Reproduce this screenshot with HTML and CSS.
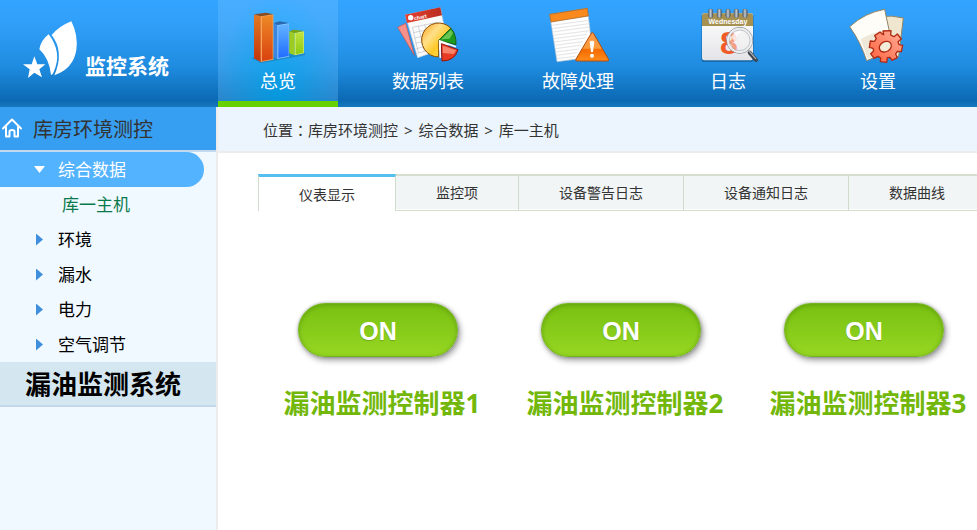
FILE: index.html
```
<!DOCTYPE html>
<html lang="zh-CN">
<head>
  <meta charset="UTF-8">
  <title>监控系统</title>
  <link rel="stylesheet" href="styles.css">
</head>
<body>

  <header class="header">
    <div class="logo">
      <svg class="logo-img" viewBox="66 60 171 180" aria-hidden="true">
        <path fill="#fff" d="M103 169l9 24 24 0-18 15 8 24-23-14-19 16 5-26-20-15 26 0z"/>
        <path fill="#fff" d="M146 103Q123 120 118 148Q148 175 153 225Q159 224 161 216Q188 158 146 103z"/>
        <path fill="#fff" d="M214 64Q178 78 155 105Q194 155 163 226Q220 206 229 150Q235 105 214 64z"/>
      </svg>
      <span class="logo-text">监控系统</span>
    </div>
    <nav class="menu">
      <a class="menu-item active" href="#">
        <svg class="menu-icon" viewBox="93 9 192 192" aria-hidden="true">
          <defs>
            <linearGradient id="barRed" x1="0" y1="0" x2="0" y2="1"><stop offset="0" stop-color="#ee8a26"/><stop offset="1" stop-color="#d9420f"/></linearGradient>
            <linearGradient id="barRedSide" x1="0" y1="0" x2="0" y2="1"><stop offset="0" stop-color="#e27a22"/><stop offset="1" stop-color="#c2330c"/></linearGradient>
            <linearGradient id="barBlue" x1="0" y1="0" x2="0" y2="1"><stop offset="0" stop-color="#62b4ff"/><stop offset="1" stop-color="#1f6cff"/></linearGradient>
            <linearGradient id="barGreen" x1="0" y1="0" x2="0" y2="1"><stop offset="0" stop-color="#c0e23c"/><stop offset="1" stop-color="#8ccb10"/></linearGradient>
          </defs>
          <path fill="#000" opacity=".15" d="M108 174l30 16 132-24v-8l-40-4z"/>
          <path fill="#9ccc22" d="M223 94l16 4v68l-16-6z"/>
          <path fill="#d3ee72" d="M239 98l28-4v66l-28 6z"/>
          <path fill="url(#barGreen)" d="M242 100l23-4v62l-23 5z"/>
          <path fill="#7ba512" d="M223 94l14-5 30 4-28 6z"/>
          <path fill="#3b86e0" d="M176 70l12 5v102l-12-7z"/>
          <path fill="#8cc5ff" d="M187 75l35-5v100l-35 7z"/>
          <path fill="url(#barBlue)" d="M190 77l31-5v96l-31 6z"/>
          <path fill="#2b68ad" d="M176 69l18-5 28 5-34 6z"/>
          <path fill="url(#barRedSide)" d="M117 44l21 4v138l-21-11z"/>
          <path fill="#f7a35c" d="M137 48l38-5v136l-38 7z"/>
          <path fill="url(#barRed)" d="M141 50l32-5v132l-32 6z"/>
          <path fill="#8d4b1c" d="M117 43l36-5 22 5-38 6z"/>
        </svg>
        <span>总览</span>
      </a>
      <a class="menu-item" href="#">
        <svg class="menu-icon" viewBox="543 9 192 192" aria-hidden="true">
          <defs>
            <linearGradient id="pieYellow" x1="0" y1="0" x2="1" y2="1"><stop offset="0" stop-color="#ff9d14"/><stop offset=".35" stop-color="#ffe08a"/><stop offset=".6" stop-color="#ffc928"/><stop offset="1" stop-color="#ffe95c"/></linearGradient>
            <linearGradient id="sheetHead" x1="0" y1="0" x2="1" y2="0"><stop offset="0" stop-color="#e8402e"/><stop offset="1" stop-color="#b82d22"/></linearGradient>
          </defs>
          <path fill="#f78f8a" stroke="#c94f49" stroke-width="2" d="M548 82l24-12 26 96z"/>
          <path fill="#fbfbfb" stroke="#c9ced6" stroke-width="2" d="M571 45l105-22 24 118-92 32z"/>
          <path fill="url(#sheetHead)" d="M570 44l106-22 5 24-105 23z"/>
          <circle cx="587" cy="53" r="8" fill="#fff"/>
          <text class="icon-chart" x="598" y="61" transform="rotate(-12 598 61)">chart</text>
          <path fill="none" stroke="#bcc1c9" stroke-width="2" d="M592 82l76-15M595 98l76-16M598 114l68-15M601 130l60-15M604 146l50-13M607 160l54-15M592 82l18 76M610 78l18 76M629 74l18 76M648 70l18 76"/>
          <path fill="url(#pieYellow)" stroke="#8a4c00" stroke-width="3" d="M671 121L671 171A51 51 0 1 1 708 85z"/>
          <path fill="#1f9a20" stroke="#176417" stroke-width="3" d="M671 121L708 85Q724 103 723 134z"/>
          <path fill="#8fdc6c" opacity=".65" d="M678 118l30-29 6 10-10 17z"/>
          <path fill="#e73c22" stroke="#8f1410" stroke-width="3" d="M679 131l50 18Q719 183 681 183z"/>
          <path fill="#ffa38c" opacity=".7" d="M683 137l41 14-8 11-33-3z"/>
          <path fill="none" stroke="#fff" stroke-width="5" d="M723 140l-49-17 2 51"/>
        </svg>
        <span>数据列表</span>
      </a>
      <a class="menu-item" href="#">
        <svg class="menu-icon" viewBox="108 9 192 192" aria-hidden="true">
          <defs>
            <linearGradient id="warn" x1="0" y1="0" x2="0" y2="1"><stop offset="0" stop-color="#ff9a4c"/><stop offset=".55" stop-color="#fb9a3a"/><stop offset=".6" stop-color="#f56a00"/><stop offset="1" stop-color="#ff8c1c"/></linearGradient>
          </defs>
          <path fill="#fff" stroke="#a9bccc" stroke-width="2" d="M119 43l113-18 18 146-109 14z"/>
          <path fill="none" stroke="#e4e4e4" stroke-width="3" d="M125 76l112-15M126 86l112-15M128 96l111-15M129 106l111-14M131 116l100-13M132 126l94-12M134 136l84-11M135 146l78-10M137 156l70-9M138 166l63-8M140 176l56-7"/>
          <path fill="#fb8a1e" stroke="#9a5712" stroke-width="2" d="M119 43l113-18 3 23-112 18z"/>
          <path fill="url(#warn)" stroke="#b34c08" stroke-width="3" stroke-linejoin="round" d="M245 98q3-2 6 3l44 76q3 6-4 6h-89q-7 0-4-6z"/>
          <path fill="#fff" d="M239 125q7-6 14 0l-4 31h-6z"/>
          <circle cx="246" cy="167" r="6" fill="#fff"/>
        </svg>
        <span>故障处理</span>
      </a>
      <a class="menu-item" href="#">
        <svg class="menu-icon" viewBox="558 9 192 192" aria-hidden="true">
          <defs>
            <linearGradient id="calBody" x1="0" y1="0" x2="0" y2="1"><stop offset="0" stop-color="#fff"/><stop offset="1" stop-color="#e4e4e8"/></linearGradient>
            <linearGradient id="ring" x1="0" y1="0" x2="1" y2="0"><stop offset="0" stop-color="#56616b"/><stop offset=".5" stop-color="#c3ccd4"/><stop offset="1" stop-color="#46525d"/></linearGradient>
          </defs>
          <rect x="574" y="42" width="157" height="144" rx="8" fill="#000" opacity=".25"/>
          <rect x="576" y="40" width="153" height="141" rx="7" fill="url(#calBody)"/>
          <path fill="#a69152" d="M576 78V47q0-7 7-7h139q7 0 7 7v31z"/>
          <g fill="url(#ring)" stroke="#4c5964" stroke-width="1">
            <rect x="595" y="27" width="14" height="26" rx="6"/>
            <rect x="621" y="27" width="14" height="26" rx="6"/>
            <rect x="647" y="27" width="14" height="26" rx="6"/>
            <rect x="672" y="27" width="14" height="26" rx="6"/>
            <rect x="698" y="27" width="14" height="26" rx="6"/>
          </g>
          <text class="icon-day" x="654" y="72">Wednesday</text>
          <text class="icon-date" x="657" y="162">8</text>
          <path stroke="#3f454c" stroke-width="12" stroke-linecap="round" d="M719 158l19 22"/>
          <path stroke="#a4abb3" stroke-width="4" stroke-linecap="round" d="M715 150l22 26"/>
          <circle cx="689" cy="121" r="39" fill="#f3f3f5" fill-opacity=".45" stroke="#8c9095" stroke-width="3"/>
          <circle cx="689" cy="121" r="35" fill="none" stroke="#eceef0" stroke-width="6"/>
          <circle cx="689" cy="121" r="31" fill="none" stroke="#a9adb2" stroke-width="2"/>
          <path fill="#fff" opacity=".7" d="M664 112q10-22 34-18-18 6-22 32z"/>
        </svg>
        <span>日志</span>
      </a>
      <a class="menu-item" href="#">
        <svg class="menu-icon" viewBox="138 9 192 192" aria-hidden="true">
          <defs>
            <linearGradient id="gear" x1="1" y1="0" x2="0" y2="1"><stop offset="0" stop-color="#ffb09a"/><stop offset="1" stop-color="#ff603c"/></linearGradient>
          </defs>
          <path fill="#efe6cf" stroke="#8f8566" stroke-width="3" d="M240 50q35-5 70 4l-14 116-66-6z"/>
          <path fill="#fffdf8" stroke="#8f8566" stroke-width="3" d="M149 80Q195 38 254 28L280 150 200 182Q182 126 149 80z"/>
          <path fill="#efe8d8" d="M182 118q36-22 82-27l10 56-71 30z"/>
          <path fill="url(#gear)" stroke="#b02a12" stroke-width="4" stroke-linejoin="round" d="M251 104l-2-11 24-1-1 13 10 5 10-8 12 15-10 8 3 9 11 2-4 19-12-1-5 8 5 11-16 8-6-9-8 1-2 14-19-2 1-11-8-5-12 6-10-14 9-8-2-8-11-3 3-19 12 1 6-8-5-9 16-11 8 7z"/>
          <ellipse cx="256" cy="140" rx="19" ry="15" transform="rotate(-30 256 140)" fill="#f3ecd8" stroke="#b02a12" stroke-width="4"/>
        </svg>
        <span>设置</span>
      </a>
    </nav>
  </header>

  <div class="container">
    <aside class="sidebar">
      <h2 class="sidebar-title">
        <svg class="home-icon" viewBox="0 0 20 20" aria-hidden="true">
          <path fill="none" stroke="#fff" stroke-width="2" stroke-linejoin="round" stroke-linecap="round" d="M1 10.500L10 1.500L19 10.500M4 9V18.500H7.500V13.500Q7.500 12 10 12T12.500 13.500V18.500H16V9"/>
        </svg>
        库房环境测控
      </h2>
      <ul class="tree">
        <li><a class="tree-item open" href="#">综合数据</a></li>
        <li><a class="tree-child" href="#">库一主机</a></li>
        <li><a class="tree-item" href="#">环境</a></li>
        <li><a class="tree-item" href="#">漏水</a></li>
        <li><a class="tree-item" href="#">电力</a></li>
        <li><a class="tree-item" href="#">空气调节</a></li>
      </ul>
      <h2 class="sidebar-section">漏油监测系统</h2>
    </aside>

    <main class="main">
      <div class="breadcrumb">位置<span class="colon" lang="zh-TW">：</span>库房环境测控 <span class="sep">&gt;</span> 综合数据 <span class="sep">&gt;</span> 库一主机</div>

      <div class="tabs">
        <button type="button" class="tab active">仪表显示</button>
        <button type="button" class="tab">监控项</button>
        <button type="button" class="tab">设备警告日志</button>
        <button type="button" class="tab">设备通知日志</button>
        <button type="button" class="tab">数据曲线</button>
      </div>

      <div class="controllers">
        <div class="controller">
          <button type="button" class="switch" aria-describedby="c1">ON</button>
          <p class="controller-name" id="c1">漏油监测控制器1</p>
        </div>
        <div class="controller">
          <button type="button" class="switch" aria-describedby="c2">ON</button>
          <p class="controller-name" id="c2">漏油监测控制器2</p>
        </div>
        <div class="controller">
          <button type="button" class="switch" aria-describedby="c3">ON</button>
          <p class="controller-name" id="c3">漏油监测控制器3</p>
        </div>
      </div>
    </main>
  </div>

</body>
</html>
```

FILE: styles.css
```
* {
  box-sizing: border-box;
}
body {
  margin: 0;
  min-height: 100vh;
  display: flex;
  flex-direction: column;
  overflow-x: hidden;
  font-family: "Noto Sans", "Noto Sans CJK SC", sans-serif;
  color: #333;
  background: #fff;
}
a {
  text-decoration: none;
}
button {
  font-family: inherit;
  cursor: pointer;
}

/* header */
.header {
  display: flex;
  background: linear-gradient(#33a4ff 0, #31a0fa 20%, #1f8ce0 62%, #0b69b3 94%, #1578bd 100%);
}
.logo {
  display: flex;
  flex: none;
  width: 218px;
  padding: 20px 0 0 22px;
}
.logo-img {
  width: 57px;
  height: 60px;
}
.logo-text {
  padding: 31px 0 0 6px;
  font-size: 21px;
  line-height: 30px;
  font-weight: bold;
  color: #fff;
}
.menu {
  display: flex;
  gap: 30px;
}
.menu-item {
  display: flex;
  flex-direction: column;
  align-items: center;
  width: 120px;
  padding-top: 3px;
  border-bottom: 6px solid transparent;
  font-size: 18px;
  line-height: 28px;
  color: #fff;
}
.menu-item.active {
  height: 107px;
  background: radial-gradient(ellipse at 50% 90%, rgba(0, 180, 245, 0.6), rgba(120, 195, 255, 0.3) 75%);
  border-bottom-color: #66d000;
}
.menu-icon {
  width: 64px;
  height: 64px;
}
.icon-chart,
.icon-day,
.icon-date {
  font-family: "Liberation Sans", Arial, sans-serif;
  font-weight: bold;
  fill: #fff;
}
.icon-chart {
  font-size: 16px;
}
.icon-day {
  font-size: 21px;
  text-anchor: middle;
}
.icon-date {
  font-size: 96px;
  text-anchor: middle;
  fill: #f15a29;
}

/* sidebar */
.container {
  display: flex;
  flex: 1;
}
.sidebar {
  flex: none;
  width: 218px;
  background: #f0f9ff;
  border-right: 2px solid #ececec;
}
.sidebar-title {
  display: flex;
  align-items: center;
  gap: 11px;
  margin: 0;
  padding: 2px 2px 0;
  border-bottom: 2px solid #c3d9f0;
  background: #379ff2;
  font-size: 20px;
  line-height: 41px;
  font-weight: normal;
}
.home-icon {
  width: 20px;
  height: 20px;
  margin-bottom: 4px;
}
.tree {
  margin: 0;
  padding: 0;
  list-style: none;
  font-size: 17px;
  line-height: 35px;
}
.tree-item {
  display: flex;
  align-items: center;
  gap: 15px;
  padding-left: 36px;
  color: #000;
}
.tree-item::before {
  content: "";
  width: 7px;
  height: 12px;
  background: #3f8fdc;
  clip-path: polygon(0 0, 100% 50%, 0 100%);
}
.tree-item.open {
  gap: 13px;
  margin-right: 12px;
  padding-left: 34px;
  border-radius: 0 18px 18px 0;
  background: #54b3ff;
  color: #fff;
}
.tree-item.open::before {
  width: 11px;
  height: 7px;
  background: #fff;
  clip-path: polygon(0 0, 100% 0, 50% 100%);
}
.tree-child {
  display: block;
  padding-left: 62px;
  color: #0b7a4b;
}
.sidebar-section {
  margin: 0;
  padding: 2px 0 0 25px;
  border-bottom: 2px solid #c4d8ec;
  background: #d4e6ef;
  font-size: 26px;
  line-height: 41px;
  color: #000;
}

/* content */
.main {
  flex: 1;
  min-width: 0;
}
.breadcrumb {
  padding: 2px 45px 0;
  border-bottom: 2px solid #ececec;
  background: #ecf5fd;
  font-size: 15px;
  line-height: 41px;
}
/* full-width colon centred in its cell */
.colon {
  font-family: "Noto Sans CJK TC", sans-serif;
}
.sep {
  margin: 0 2px;
}
.tabs {
  display: flex;
  margin: 21px 0 0 40px;
  overflow: hidden;
}
.tab {
  flex: none;
  height: 37px;
  padding: 0 40px 2px;
  border: 0;
  border-top: 2px solid #d5decf;
  border-right: 1px solid #d0dccb;
  border-bottom: 1px solid #d5decf;
  background: #f1f5f6;
  box-shadow: inset 0 -1px #fff;
  font-size: 14px;
  color: #333;
}
.tab.active {
  padding-bottom: 0;
  border-top: 3px solid #55bfef;
  border-left: 1px solid #d0dccb;
  border-bottom: 0;
  background: #fff;
}
.tab:last-child {
  flex: 1 0 auto;
  text-align: left;
}
.controllers {
  display: flex;
  flex-wrap: wrap;
  gap: 35px;
  padding: 92px 0 0 56px;
}
.controller {
  width: 208px;
  text-align: center;
}
.switch {
  width: 160px;
  height: 54px;
  padding: 2px 0 0;
  border: 1px solid #74b41c;
  border-radius: 27px;
  background: linear-gradient(#78c012, #96d722);
  box-shadow: inset 0 1px 4px rgba(60, 110, 0, 0.4), 2px 3px 6px rgba(0, 0, 0, 0.4), 0 0 3px rgba(0, 0, 0, 0.3);
  font-family: "Liberation Sans", Arial, sans-serif;
  font-size: 25px;
  font-weight: bold;
  color: #fff;
  text-shadow: 0 1px 1px rgba(0, 0, 0, 0.2);
}
.controller-name {
  margin: 26px 0 0;
  padding-left: 8px;
  font-size: 26px;
  line-height: 40px;
  font-weight: bold;
  white-space: nowrap;
  color: #72b70a;
}
```
